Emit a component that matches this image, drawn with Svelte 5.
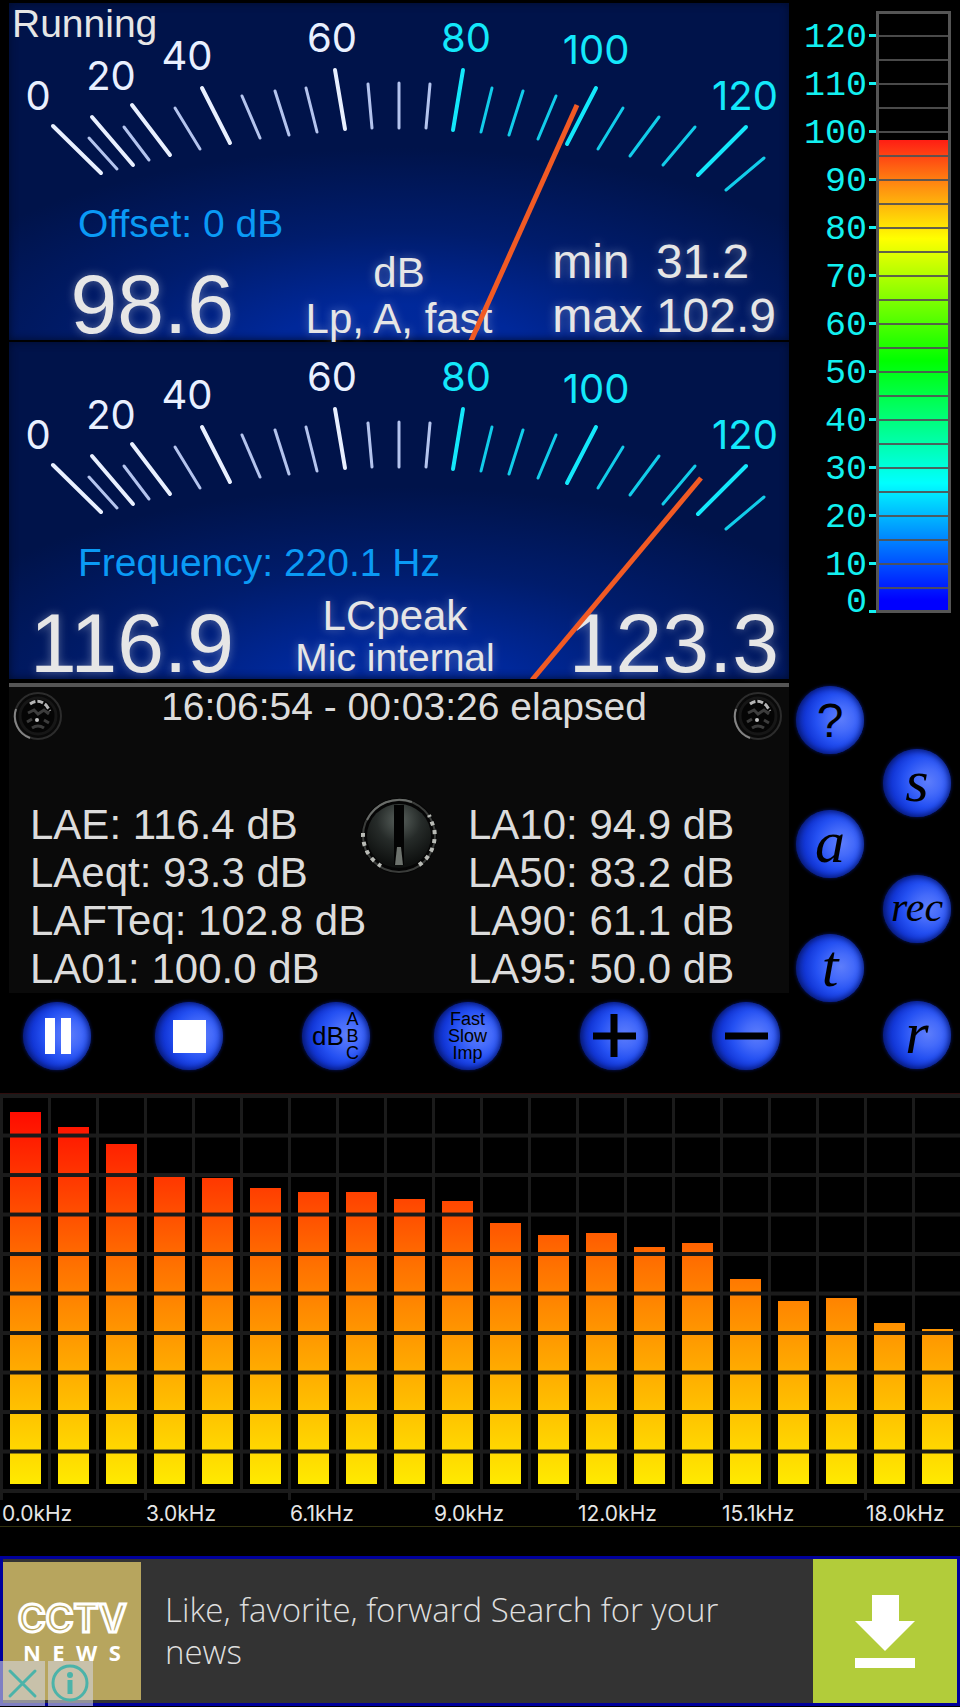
<script>
    // scale lines of the dials: [x1, y1, x2, y2, major]
    const whiteTicks = [
        [53, 126, 101, 173, true],
        [89, 138, 117, 169],
        [92, 117, 133, 165, true],
        [124, 127, 149, 160],
        [132, 105, 170, 155, true],
        [175, 108, 200, 149],
        [202, 88, 230, 143, true],
        [242, 96, 260, 138],
        [275, 91, 289, 135],
        [306, 88, 317, 132],
        [335, 70, 345, 129, true],
        [368, 84, 372, 128],
        [399, 83, 399, 128],
        [430, 84, 426, 128],
    ]
    const cyanTicks = [
        [463, 70, 453, 130, true],
        [492, 88, 481, 132],
        [523, 91, 509, 135],
        [556, 96, 538, 139],
        [596, 88, 567, 144, true],
        [623, 108, 598, 149],
        [659, 117, 630, 156],
        [695, 127, 663, 165],
        [746, 127, 698, 175, true],
        [764, 158, 726, 190],
    ]
    const scaleLabels = [
        { text: '0', x: 38, y: 110 },
        { text: '20', x: 111, y: 90 },
        { text: '40', x: 187, y: 70 },
        { text: '60', x: 332, y: 52 },
        { text: '80', x: 466, y: 52, hot: true },
        { text: '100', x: 596, y: 64, hot: true },
        { text: '120', x: 745, y: 110, hot: true },
    ]

    const leftStats = ['LAE: 116.4 dB', 'LAeqt: 93.3 dB', 'LAFTeq: 102.8 dB', 'LA01: 100.0 dB']
    const rightStats = ['LA10: 94.9 dB', 'LA50: 83.2 dB', 'LA90: 61.1 dB', 'LA95: 50.0 dB']

    const levelMarks = [120, 110, 100, 90, 80, 70, 60, 50, 40, 30, 20, 10, 0]
    const maxLevel = 125

    // band levels, full height of the plot is plotHeight
    const bands = [372, 357, 340, 309, 306, 296, 292, 292, 285, 283, 261, 249, 251, 237, 241, 205, 183, 186, 161, 155]
    const plotHeight = 386
    const freqs = ['0.0kHz', '3.0kHz', '6.1kHz', '9.0kHz', '12.0kHz', '15.1kHz', '18.0kHz']

    let running = $state(true)
    let level = $state(98.6)
    let adOpen = $state(true)

    let status = $derived(running ? 'Running' : 'Paused')
</script>

{#snippet scale()}
    <svg class="layer" viewBox="9 3 780 337" aria-hidden="true">
        {#each whiteTicks as [x1, y1, x2, y2, major]}
            <line {x1} {y1} {x2} {y2} class="tick" class:major />
        {/each}
        {#each cyanTicks as [x1, y1, x2, y2, major]}
            <line {x1} {y1} {x2} {y2} class="tick hot" class:major />
        {/each}
        {#each scaleLabels as l}
            <text x={l.x} y={l.y} class:hot={l.hot}>{l.text}</text>
        {/each}
    </svg>
{/snippet}

{#snippet needle(x1, y1, x2, y2)}
    <svg class="layer" viewBox="9 3 780 337" aria-hidden="true">
        <line {x1} {y1} {x2} {y2} class="needle" />
    </svg>
{/snippet}

{#snippet screw()}
    <svg class="screw" viewBox="0 0 50 50" aria-hidden="true">
        <circle cx="25" cy="25" r="23" fill="#090909" stroke="#2c2c2c" stroke-width="2" />
        <circle cx="25" cy="25" r="18" fill="#050505" stroke="#161616" stroke-width="3" />
        <path d="M3 18a23 23 0 0 0 14 29" fill="none" stroke="#858585" stroke-width="2" />
        <path d="M17 13q8-6 16 1l4 6" fill="none" stroke="#b5b5b5" stroke-width="3" stroke-dasharray="6 2" />
        <path d="M15 22l6-3 4 4 6-4 5 4M14 31l5-3M31 29l5 3M19 37q6-4 12 0" fill="none" stroke="#3c3c3c" stroke-width="3" />
        <circle cx="24" cy="29" r="2" fill="#c4c4c4" />
    </svg>
{/snippet}

<div class="app">
    <div class="device">
        <main>
            <section class="dial">
                {@render scale()}
                <span class="status">{status}</span>
                <span class="caption">Offset: 0 dB</span>
                <div class="readings">
                    <span class="big">{level}</span>
                    <div class="unit spaced">
                        <span>dB</span>
                        <span>Lp, A, fast</span>
                    </div>
                    <dl>
                        <dt>min</dt><dd>31.2</dd>
                        <dt>max</dt><dd>102.9</dd>
                    </dl>
                </div>
                {@render needle(577, 105, 471, 341)}
            </section>

            <section class="dial">
                {@render scale()}
                <span class="caption">Frequency: 220.1 Hz</span>
                <div class="readings">
                    <span class="big">116.9</span>
                    <div class="unit source">
                        <span>LCpeak</span>
                        <span class="mic">Mic internal</span>
                    </div>
                    <span class="big peak">123.3</span>
                </div>
                {@render needle(701, 139, 532, 341)}
            </section>

            <section class="plate">
                <div class="plate-top">
                    {@render screw()}
                    <span class="time">16:06:54 - 00:03:26 elapsed</span>
                    {@render screw()}
                </div>
                <div class="stats">
                    <ul>
                        {#each leftStats as s}<li>{s}</li>{/each}
                    </ul>
                    <svg class="knob" viewBox="0 0 78 78" aria-hidden="true">
                        <defs>
                            <radialGradient id="metal" cx=".5" cy=".25" r=".7">
                                <stop offset="0" stop-color="#59615d" />
                                <stop offset=".5" stop-color="#262b29" />
                                <stop offset="1" stop-color="#0e100f" />
                            </radialGradient>
                        </defs>
                        <circle cx="39" cy="39" r="38" fill="#050505" />
                        <circle cx="39" cy="39" r="36" fill="none" stroke="#3a3c3a" stroke-width="2" />
                        <path d="M7 23A36 36 0 0 1 52 5" fill="none" stroke="#6a6d6a" stroke-width="2" />
                        <path d="M3 36a36 36 0 0 0 18 33M59 68a36 36 0 0 0 15-37l-5-13" fill="none" stroke="#b9bbb6" stroke-width="4" stroke-dasharray="4 5" />
                        <circle cx="39" cy="39" r="32" fill="url(#metal)" />
                        <path d="M34 8h10v60H34z" fill="#030303" />
                        <path d="M37 50h4l2 18h-8z" fill="#6d726d" />
                    </svg>
                    <ul>
                        {#each rightStats as s}<li>{s}</li>{/each}
                    </ul>
                </div>
            </section>

            <div class="controls">
                <div class="pair">
                    <button class="ball" aria-label="Pause" onclick={() => (running = !running)}>
                        <svg viewBox="0 0 68 68"><path d="M22 16h10v36H22zM38 16h10v36H38z" fill="#fff" /></svg>
                    </button>
                    <button class="ball" aria-label="Stop" onclick={() => (running = false)}>
                        <svg viewBox="0 0 68 68"><path d="M18 18h33v33H18z" fill="#fff" /></svg>
                    </button>
                </div>
                <div class="pair">
                    <button class="ball weighting">
                        <span>dB</span>
                        <span class="small">A<br />B<br />C</span>
                    </button>
                    <button class="ball"><span class="small">Fast<br />Slow<br />Imp</span></button>
                </div>
                <div class="pair">
                    <button class="ball" aria-label="Increase">
                        <svg viewBox="0 0 68 68"><path d="M13 34h43M34 12v43" stroke="#000" stroke-width="7" /></svg>
                    </button>
                    <button class="ball" aria-label="Decrease">
                        <svg viewBox="0 0 68 68"><path d="M13 34h43" stroke="#000" stroke-width="7" /></svg>
                    </button>
                </div>
            </div>
        </main>

        <aside>
            <div class="level">
                <ol>
                    {#each levelMarks as m}
                        <li>{m}</li>
                    {/each}
                </ol>
                <div class="bar">
                    <div class="fill" style="height: {(level / maxLevel) * 100}%"></div>
                </div>
            </div>
            <div class="keys">
                <div class="key-column">
                    <button class="ball help">?</button>
                    <button class="ball script">a</button>
                    <button class="ball script">t</button>
                </div>
                <div class="key-column low">
                    <button class="ball script">s</button>
                    <button class="ball script rec">rec</button>
                    <button class="ball script">r</button>
                </div>
            </div>
        </aside>
    </div>

    <section class="spectrum">
        <div class="plot">
            {#each bands as b}
                <div class="band">
                    <div class="column" style="height: {(b / plotHeight) * 100}%"></div>
                </div>
            {/each}
        </div>
        <div class="axis">
            {#each freqs as f}
                <span>{f}</span>
            {/each}
        </div>
    </section>

    {#if adOpen}
        <section class="ad">
            <div class="brand">
                <span class="cctv">CCTV</span>
                <span class="news">N  E  W  S</span>
            </div>
            <p>Like, favorite, forward Search for your news</p>
            <button class="download" aria-label="Download">
                <svg viewBox="0 0 144 144"><path d="M59 36h27v26h16l-30 30-30-30h17zM42 99h60v10H42z" fill="#fff" /></svg>
            </button>
            <div class="ad-tools">
                <button aria-label="Close ad" onclick={() => (adOpen = false)}>
                    <svg viewBox="0 0 45 45"><path d="M10 10l25 25M35 10L10 35" stroke="#4bb3a9" stroke-width="3" stroke-linecap="round" /></svg>
                </button>
                <button aria-label="About this ad">
                    <svg viewBox="0 0 45 45">
                        <circle cx="22" cy="22" r="17" fill="none" stroke="#4bb3a9" stroke-width="3" />
                        <circle cx="22" cy="14" r="3" fill="#4bb3a9" />
                        <path d="M22 19v14" stroke="#4bb3a9" stroke-width="5" />
                    </svg>
                </button>
            </div>
        </section>
    {/if}
</div>

<style>
    :global(body) {
        margin: 0;
        background: #000;
    }

    .app {
        font-family: "Liberation Sans", Arial, sans-serif;
        color: #e6e6e6;
        background: #000;
    }

    button {
        margin: 0;
        padding: 0;
        border: 0;
        font-family: inherit;
        color: #000;
        cursor: pointer;
    }

    ul, ol, dl, dd, p {
        margin: 0;
        padding: 0;
        list-style: none;
    }

    .device {
        display: grid;
        grid-template-columns: 1fr 171px;
        padding-top: 3px;
    }

    main {
        padding-left: 9px;
        min-width: 0;
    }

    /* Dials */
    .dial {
        position: relative;
        display: flex;
        flex-direction: column;
        min-height: 337px;
        margin-bottom: 2px;
        background: radial-gradient(ellipse 66% 62% at 50% 105%, #002a9e 0, #00289a 25%, #001c6c 60%, #00134a 100%);
        box-shadow: inset 0 0 8px #000c2c;
    }

    .layer {
        position: absolute;
        inset: 0;
        width: 100%;
        height: 100%;
    }

    .tick {
        stroke: #b4c4ee;
        stroke-width: 3;
        stroke-linecap: round;
    }

    .tick.major {
        stroke: #e9f0ff;
        stroke-width: 4;
    }

    .tick.hot {
        stroke: #12cdea;
    }

    .tick.hot.major {
        stroke: #14e8fb;
    }

    .layer text {
        fill: #e9f0ff;
        font-family: Inter, sans-serif;
        font-size: 40px;
        text-anchor: middle;
    }

    .layer text.hot {
        fill: #14e8fb;
    }

    .needle {
        stroke: #f15a24;
        stroke-width: 5;
    }

    .status {
        position: relative;
        padding-left: 3px;
        font-size: 39px;
        line-height: 42px;
    }

    .caption {
        position: relative;
        margin-top: auto;
        padding-left: 69px;
        font-size: 39px;
        line-height: 40px;
        color: #0a9af5;
    }

    .readings {
        position: relative;
        display: grid;
        grid-template-columns: 225px 1fr 225px;
        align-items: end;
        align-content: end;
        height: 96px;
        white-space: nowrap;
        text-shadow: 0 0 10px rgba(255, 255, 255, 0.35);
    }

    .big {
        justify-self: end;
        font-size: 84px;
        line-height: 72px;
    }

    .peak {
        padding-right: 10px;
    }

    .unit {
        display: flex;
        flex-direction: column;
        align-items: center;
        font-size: 42px;
        line-height: 42px;
    }

    .spaced {
        gap: 4px;
    }

    .source {
        padding-right: 8px;
    }

    .mic {
        font-size: 39px;
    }

    dl {
        display: grid;
        grid-template-columns: auto auto;
        column-gap: 13px;
        row-gap: 6px;
        justify-self: end;
        padding-right: 13px;
        font-size: 48px;
        line-height: 48px;
    }

    /* Plate with the statistics */
    .plate {
        margin-top: 4px;
        border-top: 4px solid #555;
        background: #0a0a0a;
        color: #dcdcdc;
    }

    .plate-top {
        display: flex;
        justify-content: space-between;
        padding: 4px 6px 0 4px;
        height: 106px;
    }

    .screw {
        width: 50px;
        height: 50px;
    }

    .time {
        padding-left: 12px;
        font-size: 39px;
        line-height: 32px;
    }

    .stats {
        display: grid;
        grid-template-columns: 1fr 78px 1fr;
        font-size: 42px;
        line-height: 48px;
        white-space: nowrap;
    }

    .stats ul {
        min-width: 0;
        padding: 4px 0 0 21px;
    }

    .stats .knob + ul {
        padding-left: 30px;
    }

    .knob {
        width: 78px;
        height: 78px;
    }

    /* Round buttons */
    .ball {
        display: flex;
        align-items: center;
        justify-content: center;
        width: 68px;
        height: 68px;
        border-radius: 50%;
        background: radial-gradient(circle at 66% 48%, #5d7dfb 0, #456bfa 22%, #2450f2 44%, #1338d8 62%, #0a2191 86%, #051150 100%);
        box-shadow: 0 0 3px 1px #040f48, inset 0 0 6px 1px #061566;
    }

    .ball svg {
        width: 68px;
        height: 68px;
    }

    .small {
        font-size: 18px;
        line-height: 17px;
    }

    .weighting {
        gap: 2px;
        font-size: 26px;
    }

    .help {
        font-size: 48px;
    }

    .script {
        font-family: "Liberation Serif", "Times New Roman", serif;
        font-style: italic;
        font-size: 60px;
        line-height: 48px;
        padding-bottom: 4px;
    }

    .rec {
        font-size: 42px;
    }

    .controls {
        display: flex;
        justify-content: space-between;
        padding: 9px 9px 23px 14px;
    }

    .pair {
        display: flex;
        gap: 64px;
    }

    /* Level bar */
    .level {
        display: flex;
        justify-content: flex-end;
        padding: 8px 9px 0 0;
    }

    .level ol {
        font-family: "Liberation Mono", "Courier New", monospace;
        font-size: 35px;
        line-height: 20px;
        color: #12f0f0;
    }

    .level li {
        display: flex;
        align-items: center;
        justify-content: flex-end;
        gap: 2px;
        box-sizing: border-box;
        height: 48px;
        padding-top: 5px;
    }

    .level li::after {
        content: "";
        width: 7px;
        height: 3px;
        margin-bottom: 5px;
        background: #12f0f0;
    }

    .level li:last-child {
        align-items: flex-end;
        height: 26px;
    }

    .level li:last-child::after {
        margin-bottom: 0;
    }

    .bar {
        position: relative;
        display: flex;
        align-items: flex-end;
        width: 69px;
        height: 596px;
        border: 3px solid #555;
    }

    .bar::after {
        content: "";
        position: absolute;
        inset: 0;
        background: repeating-linear-gradient(to top, transparent 0 21px, rgba(82, 82, 82, 0.9) 21px 23px, transparent 23px 24px);
    }

    .fill {
        width: 100%;
        background: linear-gradient(#ff1e14 0, #ff9010 10%, #ff0 21%, #0f0 47%, #0ff 73%, #00f 98%);
    }

    .keys {
        display: flex;
        gap: 19px;
        padding: 73px 0 0 7px;
    }

    .key-column {
        display: flex;
        flex-direction: column;
        gap: 56px;
    }

    .key-column.low {
        gap: 58px;
        padding-top: 63px;
    }

    /* Spectrum */
    .spectrum {
        border-top: 1px solid #2e0d0d;
        border-bottom: 1px solid #33330f;
    }

    .plot {
        position: relative;
        display: grid;
        grid-template-columns: repeat(20, 1fr);
        height: 391px;
        border-top: 4px solid #1b1b1b;
        border-bottom: 4px solid #1b1b1b;
    }

    .plot::after {
        content: "";
        position: absolute;
        inset: 0 0 -4px;
        background: linear-gradient(to top, #1b1b1b 4px, transparent 4px) 0 100% / 100% 10%;
    }

    .band {
        display: flex;
        align-items: flex-end;
        justify-content: center;
        border-left: 3px solid #1b1b1b;
        padding-bottom: 5px;
    }

    .column {
        width: 31px;
        background: linear-gradient(#ff0c00, #ff7300 42%, #ffea00) 0 100% / 100% 372px no-repeat;
    }

    .axis {
        display: grid;
        grid-template-columns: repeat(20, 1fr);
        font-family: Inter, sans-serif;
        font-size: 21px;
        line-height: 24px;
    }

    .axis span {
        grid-column: span 3;
        background: linear-gradient(#1b1b1b, #1b1b1b) 0 0 / 3px 7px no-repeat;
        padding: 9px 0 0 2px;
    }

    .axis span:last-child {
        grid-column: span 2;
    }

    /* Ad banner */
    .ad {
        position: relative;
        display: flex;
        margin-top: 29px;
        border: 3px solid #00009c;
        background: #333;
    }

    .brand {
        display: flex;
        flex-direction: column;
        align-items: center;
        width: 138px;
        height: 138px;
        margin: 3px 0;
        padding-top: 34px;
        box-sizing: border-box;
        background: #b7a55e;
        color: #fff;
    }

    .cctv {
        font-family: Inter, sans-serif;
        font-weight: 600;
        font-size: 38px;
        line-height: 44px;
        color: #b7a55e;
        -webkit-text-stroke: 3px #fff;
    }

    .news {
        font-family: "Open Sans", sans-serif;
        font-weight: 700;
        font-size: 22px;
        line-height: 24px;
        white-space: pre;
    }

    .ad p {
        flex: 1;
        padding: 30px 60px 0 24px;
        font-family: "Open Sans", sans-serif;
        font-weight: 300;
        font-size: 33px;
        line-height: 42px;
        color: #dedede;
    }

    .download {
        width: 144px;
        background: #b2cc3a;
    }

    .download svg {
        display: block;
    }

    .ad-tools {
        position: absolute;
        left: -3px;
        bottom: -3px;
        display: flex;
        gap: 3px;
    }

    .ad-tools button {
        width: 45px;
        height: 45px;
        background: rgba(212, 212, 222, 0.6);
    }

    .ad-tools svg {
        display: block;
    }
</style>
